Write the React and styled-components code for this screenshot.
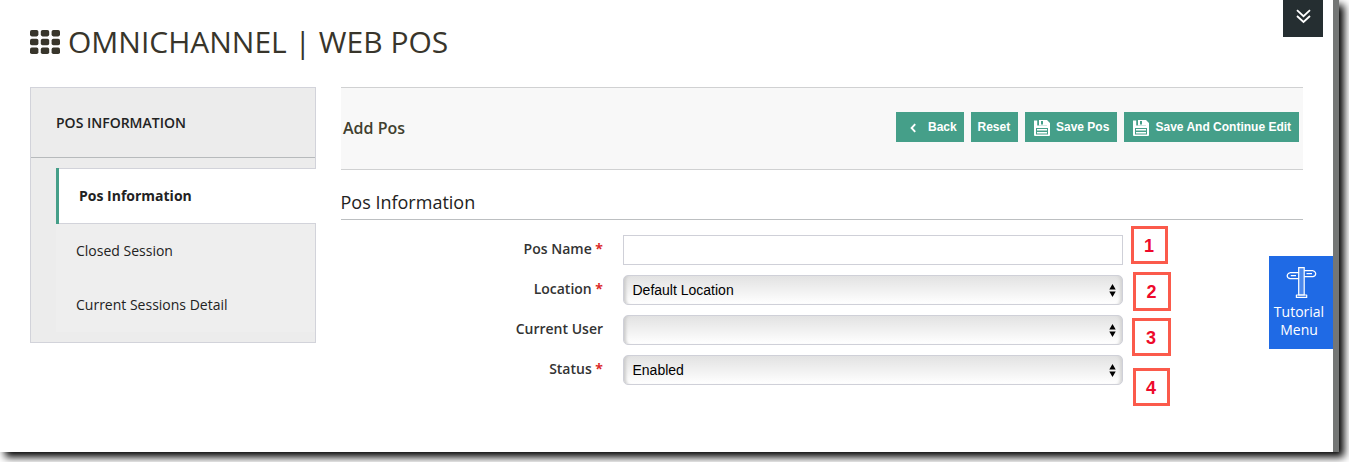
import React from "react";
import styled, { createGlobalStyle } from "styled-components";

const GlobalStyle = createGlobalStyle`
  *, *::before, *::after { box-sizing: border-box; }
  html, body { margin: 0; background: #fff; overflow: hidden; }
  body { font-family: "Open Sans", "Noto Sans", sans-serif; color: #222; }
  h1, h2, h3, p { margin: 0; font-weight: 400; }
`;

const Stage = styled.div`
  width: 1349px;
  height: 462px;
  padding: 0 10px 10px 0;
  overflow: hidden;
`;

const Window = styled.main`
  position: relative;
  width: 1339px;
  height: 452px;
  background: #fff;
  border-right: 6px solid #747675;
  box-shadow: 5px 5px 8px #000;
  padding: 23px 30px 0;
`;

const TitleBar = styled.header`
  display: flex;
  align-items: center;
  gap: 8px;
  height: 38px;
  svg { flex: none; display: block; }
`;

const Title = styled.h1`
  font-size: 30px;
  line-height: 38px;
  color: #38352b;
  white-space: nowrap;
`;

const Body = styled.div`
  display: flex;
  gap: 25px;
  margin-top: 26px;
`;

const Sidebar = styled.aside`
  flex: none;
  width: 286px;
  height: 256px;
  background: #ececec;
  border: 1px solid #d2d3da;
`;

const SidebarTitle = styled.h2`
  height: 70px;
  padding-left: 25px;
  line-height: 70px;
  font-size: 14px;
  font-weight: 600;
  border-bottom: 1px solid #b7babc;
`;

const Tabs = styled.nav`
  margin: 10px -1px 0 25px;
  background: #eee;
  border-right: 1px solid #d2d3da;
`;

const Tab = styled.div`
  height: 54px;
  padding-left: 20px;
  line-height: 54px;
  font-size: 14px;
`;

const ActiveTab = styled(Tab)`
  height: 56px;
  margin-right: -1px;
  background: linear-gradient(#d2d3da, #d2d3da) top / 100% 1px no-repeat,
    linear-gradient(#d2d3da, #d2d3da) bottom / 100% 1px no-repeat, #fff;
  box-shadow: inset 3px 0 #459f89;
  padding: 1px 0 1px 23px;
  font-weight: 700;
`;

const Content = styled.section`
  width: 962px;
`;

const Toolbar = styled.div`
  display: flex;
  align-items: flex-start;
  justify-content: space-between;
  height: 83px;
  padding: 24px 4px 0 2px;
  background: #f8f8f8;
  border: solid #d0d1d2;
  border-width: 1px 0;
`;

const ToolbarTitle = styled.h3`
  font-size: 16px;
  line-height: 32px;
  font-weight: 600;
  color: #41402f;
`;

const Actions = styled.div`
  display: flex;
  gap: 7px;
`;

const Button = styled.button`
  display: flex;
  align-items: center;
  gap: ${(p) => p.$gap || 0}px;
  width: ${(p) => p.$width}px;
  height: 30px;
  padding: 0 0 0 ${(p) => p.$inset}px;
  border: 0;
  background: #459f89;
  color: #fff;
  font: 700 12px "Liberation Sans", Arial, sans-serif;
  white-space: nowrap;
  svg { flex: none; margin-top: 2px; }
`;

const Legend = styled.h3`
  height: 50px;
  padding-top: 15px;
  border-bottom: 1px solid #bcbfc1;
  font-size: 18px;
  line-height: 34px;
  text-indent: -0.5px;
`;

const Form = styled.div`
  display: grid;
  gap: 10px;
  margin-top: 15px;
`;

const Row = styled.div`
  display: grid;
  grid-template-columns: 262px 500px;
  column-gap: 20px;
  height: 30px;
`;

const Label = styled.label`
  text-align: right;
  font-size: 14px;
  font-weight: 600;
  line-height: 28px;
  color: #333;
  white-space: nowrap;
`;

const Required = styled.span`
  color: #dc2b2b;
  font-weight: 700;
`;

const Field = styled.div`
  height: 30px;
  border: 1px solid #cfd0d8;
  background: #fff;
`;

const Select = styled(Field)`
  display: flex;
  align-items: center;
  justify-content: space-between;
  padding: 0 6px 0 8.5px;
  border-radius: 5px;
  background: linear-gradient(#e2e2e2, #fff);
  box-shadow: inset 4px 0 3px -2px #cdcdcd, inset -4px 0 3px -2px #d4d4d4;
  font: 14px "Liberation Sans", Arial, sans-serif;
  color: #000;
`;

const Callout = styled.div`
  position: absolute;
  left: ${(p) => p.$x}px;
  top: ${(p) => p.$y}px;
  width: ${(p) => p.$w}px;
  height: ${(p) => p.$h}px;
  border: 3px solid #fb5a4b;
  background: #fff;
  color: #ee0a2b;
  font: 700 18px/34px "Liberation Sans", Arial, sans-serif;
  text-align: center;
  text-indent: -1px;
`;

const Collapse = styled.button`
  position: absolute;
  top: 0;
  right: 10px;
  width: 40px;
  height: 37px;
  padding: 0;
  border: 0;
  background: #252e31;
  svg { display: block; margin: -4px 0 0 12.5px; }
`;

const Tutorial = styled.aside`
  position: absolute;
  top: 256px;
  right: 0;
  width: 64px;
  height: 93px;
  padding: 9px 4px 0 0;
  background: #1f6ae5;
  color: #fff;
  text-align: center;
  font-size: 14px;
  line-height: 18px;
  svg { display: block; margin: 0 auto 5px 17px; }
`;

const GridIcon = () => (
  <svg width="30" height="24" viewBox="0 0 30 24" fill="#38352b">
    {[0, 8.8, 17.6].map((y) =>
      [0, 10.8, 21.6].map((x) => (
        <rect key={`${x}-${y}`} x={x} y={y} width="8.4" height="6.4" rx="1.8" />
      ))
    )}
  </svg>
);

const SaveIcon = () => (
  <svg width="16" height="16" viewBox="0 0 16 16">
    <path fill="#fff" d="M0 .5H3.2V5.5H13V0L16 3V15Q16 16 15 16H1Q0 16 0 15Z" />
    <path fill="#fff" d="M5 0H13V5.5H5Z" />
    <path fill="#459f89" d="M7 1H9V4.5H7ZM2 8H14V14.6H2Z" />
    <path fill="#fff" d="M3 9H13V10.4H3ZM3 12H13V13.4H3Z" />
  </svg>
);

const BackIcon = () => (
  <svg width="7" height="10" viewBox="0 0 7 10" fill="none" stroke="#fff" strokeWidth="1.9">
    <path d="M5.2 1.2L1.6 5L5.2 8.8" />
  </svg>
);

const Arrows = () => (
  <svg width="7" height="13" viewBox="0 0 7 13">
    <path d="M3.5 0L6.7 5.4H.3ZM3.5 13L.3 7.6H6.7Z" />
  </svg>
);

const SignIcon = () => (
  <svg width="31" height="33" viewBox="0 0 31 33" fill="none" stroke="#fff" strokeWidth="1.2">
    <path fill="#4b88eb" d="M12.7 2.6H18.2V30H12.7Z" />
    <path
      strokeLinejoin="round"
      d="M12.7 7.7H4Q1.2 8.6 1.2 10.7T4 13.6H12.7M18.2 5.7H27Q29.7 6.6 29.7 8.7T27 11.6H18.2M10.4 30H20.7V32.4H10.4ZM4.8 10.7H10M20.5 8.7H26"
    />
  </svg>
);

const fields = [
  { label: "Pos Name", required: true, text: true },
  { label: "Location", required: true, value: "Default Location" },
  { label: "Current User", value: "" },
  { label: "Status", required: true, value: "Enabled" },
];

const callouts = [
  { x: 1131, y: 226, w: 37, h: 38 },
  { x: 1133, y: 272, w: 38, h: 39 },
  { x: 1132, y: 318, w: 39, h: 38 },
  { x: 1133, y: 368, w: 37, h: 38 },
];

export default function App() {
  return (
    <>
      <GlobalStyle />
      <Stage>
        <Window>
          <TitleBar>
            <GridIcon />
            <Title>OMNICHANNEL | WEB POS</Title>
          </TitleBar>
          <Body>
            <Sidebar>
              <SidebarTitle>POS INFORMATION</SidebarTitle>
              <Tabs>
                <ActiveTab>Pos Information</ActiveTab>
                <Tab>Closed Session</Tab>
                <Tab>Current Sessions Detail</Tab>
              </Tabs>
            </Sidebar>
            <Content>
              <Toolbar>
                <ToolbarTitle>Add Pos</ToolbarTitle>
                <Actions>
                  <Button $width={68} $inset={14} $gap={11}><BackIcon />Back</Button>
                  <Button $width={47} $inset={6.5}>Reset</Button>
                  <Button $width={92} $inset={9} $gap={6}><SaveIcon />Save Pos</Button>
                  <Button $width={175} $inset={9} $gap={6.5}><SaveIcon />Save And Continue Edit</Button>
                </Actions>
              </Toolbar>
              <Legend>Pos Information</Legend>
              <Form>
                {fields.map((f) => (
                  <Row key={f.label}>
                    <Label>
                      {f.label}
                      {f.required && <Required> *</Required>}
                    </Label>
                    {f.text ? <Field /> : <Select><span>{f.value}</span><Arrows /></Select>}
                  </Row>
                ))}
              </Form>
            </Content>
          </Body>
          {callouts.map((c, i) => (
            <Callout key={i} $x={c.x} $y={c.y} $w={c.w} $h={c.h}>{i + 1}</Callout>
          ))}
          <Collapse aria-label="Expand">
            <svg width="15" height="15" viewBox="0 0 15 15" fill="none" stroke="#fff" strokeWidth="1.8">
              <path d="M1 1.2L7.5 7.2L14 1.2M1 7L7.5 13L14 7" />
            </svg>
          </Collapse>
          <Tutorial>
            <SignIcon />
            <p>Tutorial</p>
            <p>Menu</p>
          </Tutorial>
        </Window>
      </Stage>
    </>
  );
}
